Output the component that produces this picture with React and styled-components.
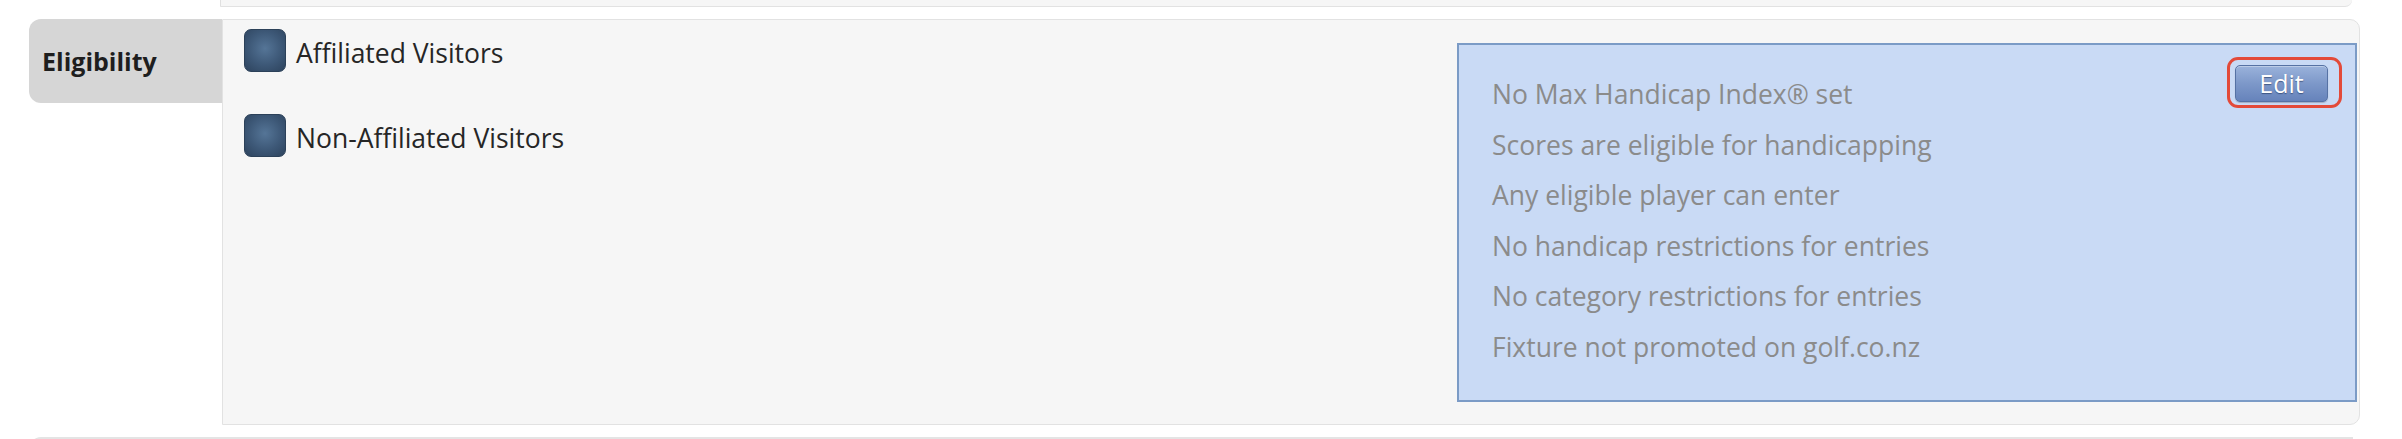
import React from "react";
import styled, { createGlobalStyle } from "styled-components";

const Global = createGlobalStyle`
  html, body { margin: 0; padding: 0; background: #ffffff; }
  body { font-family: "Open Sans", "Liberation Sans", sans-serif; }
`;

const Page = styled.div`
  padding: 0 42px 0 29px;
  display: flex;
  flex-direction: column;
`;

const PrevPanel = styled.div`
  margin: 0 8px 0 191px;
  height: 6px;
  background: #f6f6f6;
  border-left: 1px solid #e0e0e0;
  border-bottom: 1px solid #e2e2e2;
  border-bottom-right-radius: 8px;
`;

const Row = styled.div`
  display: flex;
  margin-top: 12px;
`;

const Tab = styled.div`
  width: 180px;
  height: 84px;
  padding-left: 13px;
  background: #d6d6d6;
  border-radius: 12px 0 0 12px;
  display: flex;
  align-items: center;
  font-size: 25px;
  font-weight: 700;
  color: #1e1e1e;
  flex-shrink: 0;
`;

const Panel = styled.div`
  flex: 1;
  height: 404px;
  background: #f6f6f6;
  border: 1px solid #e2e2e2;
  border-radius: 0 10px 10px 0;
  display: flex;
  justify-content: space-between;
  align-items: flex-start;
`;

const Options = styled.div`
  display: flex;
  flex-direction: column;
  gap: 37px;
  padding: 9px 0 0 21px;
`;

const OptionRow = styled.label`
  display: flex;
  align-items: flex-start;
  gap: 10px;
`;

const CheckBox = styled.span`
  width: 40px;
  height: 41px;
  border-radius: 7px;
  border: 1px solid #2c4159;
  background: radial-gradient(circle at 50% 45%, #557597 0%, #3d5877 55%, #2d435d 100%);
  flex-shrink: 0;
`;

const OptionText = styled.span`
  font-size: 26.5px;
  line-height: 48px;
  color: #262626;
`;

const InfoBox = styled.div`
  width: 896px;
  height: 355px;
  margin: 23px 2px 0 0;
  background: #c9daf5;
  border: 2px solid #7b9bc6;
  display: flex;
  justify-content: space-between;
  align-items: flex-start;
`;

const InfoList = styled.ul`
  list-style: none;
  margin: 0;
  padding: 24px 0 0 33px;
`;

const InfoItem = styled.li`
  font-size: 26.5px;
  line-height: 50.6px;
  color: #8b8b8b;
`;

const Highlight = styled.div`
  margin: 12px 13px 0 0;
  padding: 5px 11px 3px 5px;
  border: 3px solid #e34a39;
  border-radius: 11px;
  display: flex;
`;

const EditButton = styled.button`
  width: 93px;
  height: 37px;
  padding: 0;
  border: 1px solid #5672a4;
  border-radius: 5px;
  background: linear-gradient(to bottom, #9ab2db 0%, #7d98c9 50%, #6683bb 100%);
  box-shadow: inset 0 1px 0 rgba(255, 255, 255, 0.35), 0 1px 1px rgba(0, 0, 0, 0.2);
  color: #ffffff;
  font-family: "Open Sans", "Liberation Sans", sans-serif;
  font-size: 25px;
  line-height: 35px;
  text-shadow: 0 1px 1px rgba(30, 50, 90, 0.6);
  cursor: pointer;
`;

const NextPanel = styled.div`
  margin: 12px 7px 0 0;
  height: 20px;
  background: #f3f3f3;
  border-top: 2px solid #e4e4e4;
  border-top-left-radius: 12px;
`;

const infoLines = [
  "No Max Handicap Index® set",
  "Scores are eligible for handicapping",
  "Any eligible player can enter",
  "No handicap restrictions for entries",
  "No category restrictions for entries",
  "Fixture not promoted on golf.co.nz",
];

export default function App() {
  return (
    <>
      <Global />
      <Page>
        <PrevPanel />
        <Row>
          <Tab>Eligibility</Tab>
          <Panel>
            <Options>
              <OptionRow>
                <CheckBox />
                <OptionText>Affiliated Visitors</OptionText>
              </OptionRow>
              <OptionRow>
                <CheckBox />
                <OptionText>Non-Affiliated Visitors</OptionText>
              </OptionRow>
            </Options>
            <InfoBox>
              <InfoList>
                {infoLines.map((t) => (
                  <InfoItem key={t}>{t}</InfoItem>
                ))}
              </InfoList>
              <Highlight>
                <EditButton>Edit</EditButton>
              </Highlight>
            </InfoBox>
          </Panel>
        </Row>
        <NextPanel />
      </Page>
    </>
  );
}
